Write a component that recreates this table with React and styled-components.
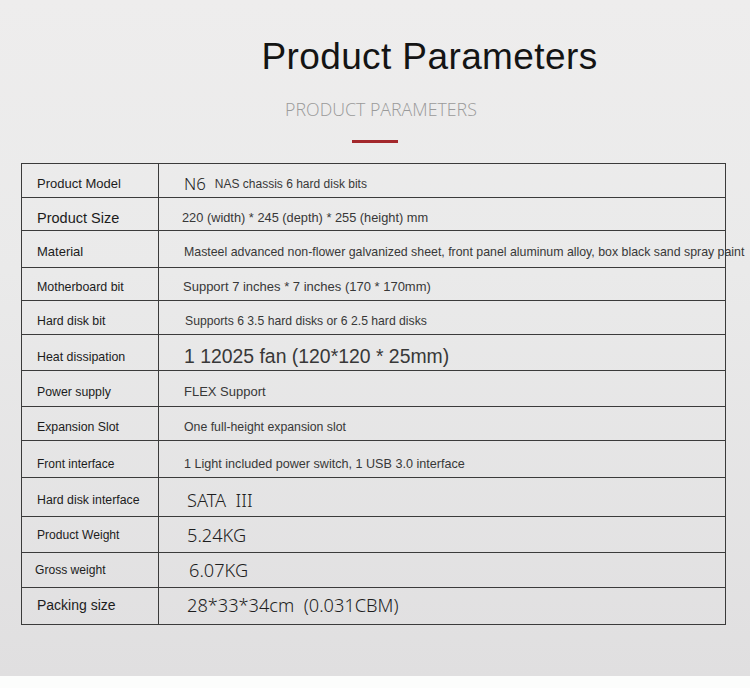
import React from 'react'
import styled, { createGlobalStyle } from 'styled-components'

const GlobalStyle = createGlobalStyle`
    html, body {
        margin: 0;
        padding: 0;
    }
    body {
        background: #fcfdfc;
        font-family: "Liberation Sans", Arial, sans-serif;
    }
`;

// dy = how far (x2) the text sits below the row's middle
const rows = [
    { label: 'Product Model', labelSize: 13, height: 34, dy: 6, model: true },
    { label: 'Product Size', labelSize: 14.5, height: 33, dy: 7, value: '220 (width) * 245 (depth) * 255 (height) mm', size: 12.8, indent: 23 },
    { label: 'Material', labelSize: 13, height: 37, dy: 5, value: 'Masteel advanced non-flower galvanized sheet, front panel aluminum alloy, box black sand spray paint', size: 12.35, indent: 25 },
    { label: 'Motherboard bit', labelSize: 12.4, height: 33, dy: 5, value: 'Support 7 inches * 7 inches (170 * 170mm)', size: 13, indent: 24 },
    { label: 'Hard disk bit', labelSize: 12.3, height: 34, dy: 6, value: 'Supports 6 3.5 hard disks or 6 2.5 hard disks', size: 12.2, indent: 26 },
    { label: 'Heat dissipation', labelSize: 12.4, height: 36, dy: 8, value: '1 12025 fan (120*120 * 25mm)', size: 19.4, indent: 25 },
    { label: 'Power supply', labelSize: 12.3, height: 36, dy: 6, value: 'FLEX Support', size: 13, indent: 25 },
    { label: 'Expansion Slot', labelSize: 12.3, height: 34, dy: 6, value: 'One full-height expansion slot', size: 12.3, indent: 25 },
    { label: 'Front interface', labelSize: 12, height: 37, dy: 9, value: '1 Light included power switch, 1 USB 3.0 interface', size: 12.6, indent: 25 },
    { label: 'Hard disk interface', labelSize: 12.3, height: 39, dy: 5, value: 'SATA\u00a0\u00a0III', size: 18.2, indent: 28, noto: true },
    { label: 'Product Weight', labelSize: 12.1, height: 36, dy: 0, value: '5.24KG', size: 18.2, indent: 28, noto: true },
    { label: 'Gross weight', labelSize: 12.1, height: 35, dy: -1, value: '6.07KG', size: 18.2, indent: 30, noto: true, labelIndent: 13 },
    { label: 'Packing size', labelSize: 14, height: 37, dy: -2, value: '28*33*34cm\u00a0\u00a0(0.031CBM)', size: 18.2, indent: 28, noto: true },
];

export default function App() {
    return (
        <Page>
            <GlobalStyle />
            <Panel>
                <Header>
                    <Title>Product Parameters</Title>
                    <Subtitle>PRODUCT PARAMETERS</Subtitle>
                    <Accent />
                </Header>
                <Table>
                    {rows.map((row) => (
                        <Row key={row.label} rowHeight={row.height}>
                            <Label size={row.labelSize} indent={row.labelIndent ?? 15} dy={row.dy}>
                                {row.label}
                            </Label>
                            <Value indent={row.model ? 25 : row.indent} dy={row.dy}>
                                {row.model ? (
                                    <>
                                        <BigText size={16.8}>N6</BigText>
                                        <PlainText size={12} gap={9}>NAS chassis 6 hard disk bits</PlainText>
                                    </>
                                ) : row.noto ? (
                                    <BigText size={row.size}>{row.value}</BigText>
                                ) : (
                                    <PlainText size={row.size}>{row.value}</PlainText>
                                )}
                            </Value>
                        </Row>
                    ))}
                </Table>
            </Panel>
        </Page>
    )
}

const Page = styled.div`
    width: 750px;
    height: 688px;
    overflow: hidden;
    background: #fcfdfc;
`;

const Panel = styled.div`
    height: 676px;
    box-sizing: border-box;
    padding-top: 38px;
    background: linear-gradient(180deg, #eeeded 0%, #eaeaea 40%, #e0dfe0 100%);
`;

const Header = styled.div`
    display: flex;
    flex-direction: column;
    align-items: center;
`;

const Title = styled.h1`
    margin: 0;
    padding-left: 109px;
    font-family: "Liberation Sans", Arial, sans-serif;
    font-weight: 400;
    font-size: 37px;
    line-height: 37px;
    color: #141414;
    letter-spacing: 0.4px;
`;

const Subtitle = styled.div`
    margin-top: 26px;
    padding-left: 12px;
    font-family: "Open Sans", sans-serif;
    font-weight: 300;
    font-size: 17.8px;
    line-height: 17px;
    color: #9a9a9a;
`;

const Accent = styled.div`
    margin-top: 22px;
    width: 46px;
    height: 3px;
    background: #a3272c;
`;

const Table = styled.div`
    margin: 20px 0 0 21px;
    width: 705px;
    box-sizing: border-box;
    border: 1px solid #3b3b3b;
    border-bottom: none;
`;

const Row = styled.div`
    display: grid;
    grid-template-columns: 137px 1fr;
    height: ${props => props.rowHeight}px;
    box-sizing: border-box;
    border-bottom: 1px solid #3b3b3b;
`;

const Cell = styled.div`
    display: flex;
    align-items: center;
    white-space: nowrap;
    box-sizing: border-box;
    padding-top: ${props => Math.max(0, props.dy)}px;
    padding-bottom: ${props => Math.max(0, -props.dy)}px;
`;

const Label = styled(Cell)`
    border-right: 1px solid #3b3b3b;
    padding-left: ${props => props.indent}px;
    font-size: ${props => props.size}px;
    color: #1c1c1c;
`;

const Value = styled(Cell)`
    padding-left: ${props => props.indent}px;
    overflow: visible;
`;

const PlainText = styled.span`
    font-family: "Liberation Sans", Arial, sans-serif;
    font-size: ${props => props.size}px;
    color: #383838;
    margin-left: ${props => props.gap || 0}px;
`;

const BigText = styled.span`
    font-family: "Noto Sans", sans-serif;
    font-size: ${props => props.size}px;
    font-weight: 350;
    color: #1e1e1e;
`;
